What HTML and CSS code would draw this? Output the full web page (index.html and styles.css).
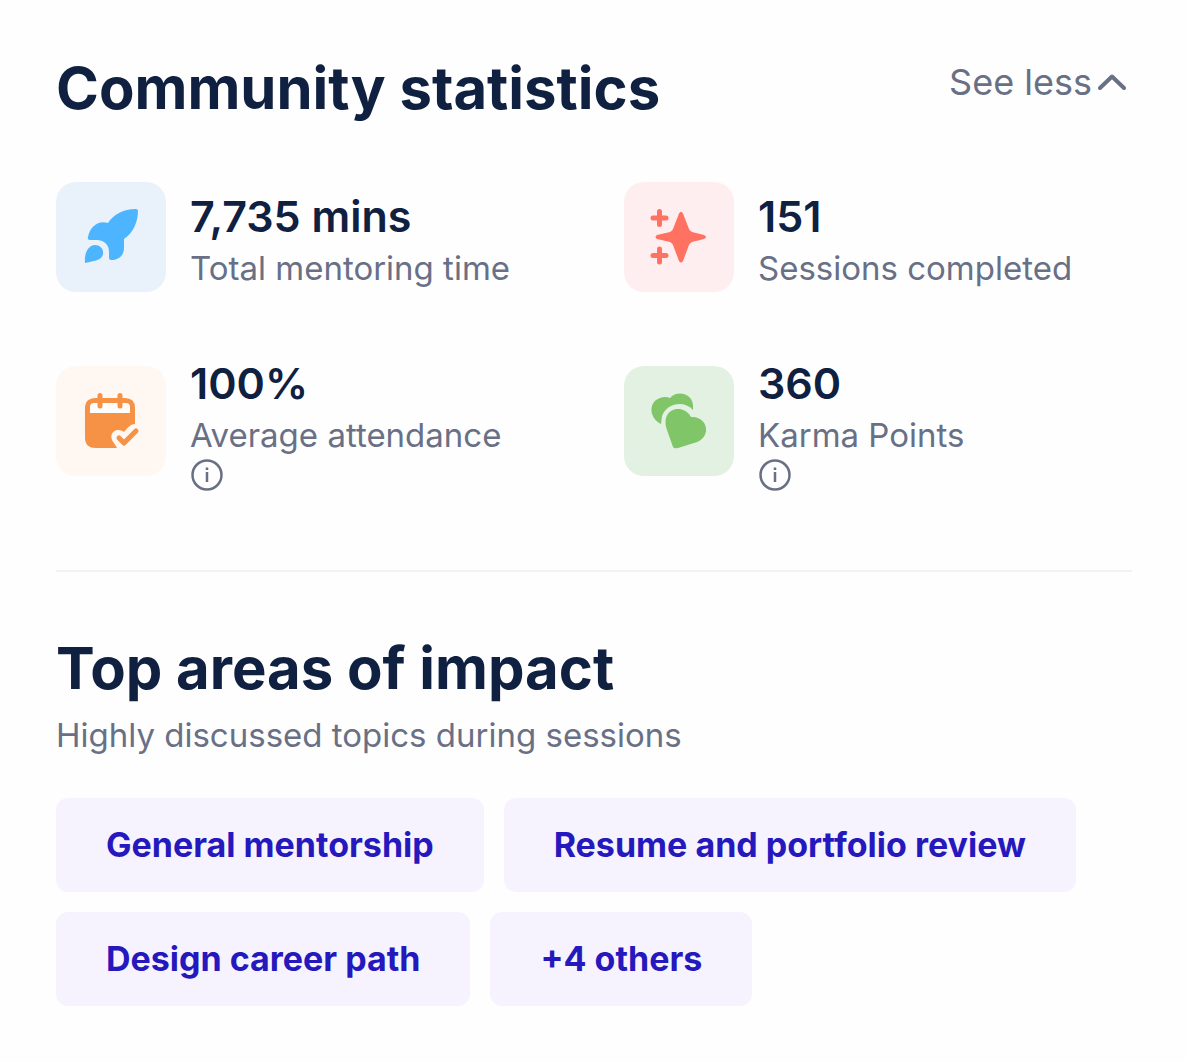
FILE: index.html
```html
<!DOCTYPE html>
<html lang="en">

<head>
    <meta charset="UTF-8">
    <meta name="viewport" content="width=device-width, initial-scale=1.0">
    <title>Community statistics</title>
    <link rel="stylesheet" href="styles.css">
</head>

<body>

    <main class="container">

        <!-- Community statistics -->
        <section class="statistics">
            <header class="section-header">
                <h2>Community statistics</h2>
                <button type="button" class="toggle">
                    See less
                    <svg class="chevron" viewBox="0 0 28 18" aria-hidden="true">
                        <path d="M2 15L14 3.500L26 15" />
                    </svg>
                </button>
            </header>

            <div class="stats">
                <div class="stat">
                    <div class="stat-icon blue">
                        <svg viewBox="0 0 110 110" aria-hidden="true">
                            <path d="M80 27Q82 27 82 29C82 40 77 51 68 57V66C68 74 62 78 55 78Q53 78 53 76V70C53 63 49 59 42 58H34Q31 58 32 55C34 45 42 38 52 41C57 33 67 27 80 27Z" />
                            <path d="M29 81C28 70 33 63 39 63C44 63 48 67 47 72C46 78 39 79 29 81Z" />
                        </svg>
                    </div>
                    <div class="stat-text">
                        <strong>7,735 mins</strong>
                        <span>Total mentoring time</span>
                    </div>
                </div>

                <div class="stat">
                    <div class="stat-icon red">
                        <svg viewBox="0 0 110 110" aria-hidden="true">
                            <path d="M55 31.500Q57 28 59 31.500L65 47Q66 49 68 50L80 53Q84 55 80 57L68 60Q66 61 65 63L59 79Q57 82 55 79L49 63Q48 61 46 60L33 57Q30 55 33 53L46 50Q48 49 49 47Z" />
                            <path class="line" d="M35.500 29.500V42.500M29 36H42M35.500 67V80M29 73.500H42" />
                        </svg>
                    </div>
                    <div class="stat-text">
                        <strong>151</strong>
                        <span>Sessions completed</span>
                    </div>
                </div>

                <div class="stat">
                    <div class="stat-icon orange">
                        <svg viewBox="0 0 110 110" aria-hidden="true">
                            <path d="M40 32H69Q79 32 79 42V58C75 58 72 61 68 66C59 60 51 69 58 77L61 82H40Q29 82 29 72V42Q29 32 40 32Z" />
                            <path class="paper" d="M34 47V41Q34 37 38 37H70Q74 37 74 41V47Z" />
                            <path class="line" d="M44 29.500V40M64 29.500V40M63 72L68 77L80 65" />
                        </svg>
                    </div>
                    <div class="stat-text">
                        <strong>100%</strong>
                        <span>Average attendance</span>
                        <button type="button" class="info" aria-label="About average attendance">
                            <svg viewBox="0 0 34 34" aria-hidden="true">
                                <circle cx="17" cy="17" r="14.500" />
                                <path d="M17 14V24M17 9.500V12" />
                            </svg>
                        </button>
                    </div>
                </div>

                <div class="stat">
                    <div class="stat-icon green">
                        <svg viewBox="0 0 110 110" aria-hidden="true">
                            <path d="M37 58C25 52 24 36 36 32Q41 30 46 32C53 24 68 27 69 39V44C60 34 43 37 38 50Z" />
                            <path d="M49 81L43 64C38 49 47 42 56 43Q63 44 67 51C76 50 83 57 82 65C81 71 77 75 70 77L54 82Q50 83 49 81Z" />
                        </svg>
                    </div>
                    <div class="stat-text">
                        <strong>360</strong>
                        <span>Karma Points</span>
                        <button type="button" class="info" aria-label="About karma points">
                            <svg viewBox="0 0 34 34" aria-hidden="true">
                                <circle cx="17" cy="17" r="14.500" />
                                <path d="M17 14V24M17 9.500V12" />
                            </svg>
                        </button>
                    </div>
                </div>
            </div>
        </section>

        <!-- Top areas of impact -->
        <section class="impact">
            <h2>Top areas of impact</h2>
            <p>Highly discussed topics during sessions</p>
            <div class="topics">
                <span class="topic">General mentorship</span>
                <span class="topic">Resume and portfolio review</span>
                <span class="topic">Design career path</span>
                <button type="button" class="topic">+4 others</button>
            </div>
        </section>

    </main>

</body>

</html>
```
FILE: styles.css
```css
/* General */
* {
    box-sizing: border-box;
}

body {
    margin: 0;
    background-color: #fefefe;
    color: #0f2040;
    font-family: Inter, sans-serif;
}

.container {
    padding: 52px 54px 52px 56px;
}

h2 {
    margin: 0;
    font-size: 58px;
    line-height: 72px;
    font-weight: 700;
}

button {
    padding: 0;
    border: none;
    background: none;
    color: inherit;
    font: inherit;
    cursor: pointer;
}

/* Section header */
.section-header {
    display: flex;
    justify-content: space-between;
    align-items: flex-start;
}

.toggle {
    display: flex;
    align-items: center;
    gap: 6px;
    padding-right: 6px;
    color: #697086;
    font-size: 36px;
    line-height: 60px;
}

.chevron {
    width: 28px;
    height: 18px;
}

.chevron path {
    fill: none;
    stroke: #697086;
    stroke-width: 4;
    stroke-linecap: round;
    stroke-linejoin: round;
}

/* Statistics grid */
.statistics {
    padding-bottom: 78px;
    border-bottom: 2px solid #f1f2f4;
}

.stats {
    display: grid;
    grid-template-columns: 1fr 1fr;
    gap: 58px 60px;
    margin-top: 58px;
}

.stat {
    display: flex;
    align-items: center;
    gap: 24px;
}

.stat-icon {
    flex: none;
    width: 110px;
    height: 110px;
    border-radius: 20px;
}

.stat-icon svg {
    display: block;
}

.stat-icon .line {
    fill: none;
    stroke-width: 5;
    stroke-linecap: round;
    stroke-linejoin: round;
}

.stat-icon .paper {
    fill: #fffdfb;
}

.blue {
    background-color: #e9f1fb;
    fill: #4db5ff;
}

.red {
    background-color: #ffeeef;
    fill: #ff7262;
}

.red .line {
    stroke: #ff7262;
}

.orange {
    background-color: #fff7f1;
    fill: #f59245;
}

.orange .line {
    stroke: #f59245;
}

.green {
    background-color: #e2f1e2;
    fill: #80c567;
}

.stat-text {
    display: flex;
    flex-direction: column;
    align-items: flex-start;
    padding-top: 4px;
}

.stat-text strong {
    font-size: 43px;
    line-height: 58px;
    font-weight: 600;
}

.stat-text span {
    color: #697086;
    font-size: 33px;
    line-height: 46px;
}

.info {
    height: 34px;
}

.info svg {
    display: block;
    width: 34px;
    height: 34px;
    fill: none;
    stroke: #697086;
    stroke-width: 2.5;
}

/* Areas of impact */
.impact {
    padding-top: 60px;
}

.impact p {
    margin: 8px 0 0;
    color: #697086;
    font-size: 33px;
    line-height: 46px;
}

.topics {
    display: flex;
    flex-wrap: wrap;
    gap: 20px;
    margin-top: 40px;
}

.topic {
    padding: 24px 50px;
    border-radius: 12px;
    background-color: #f6f3ff;
    color: #2518bd;
    font-size: 34px;
    line-height: 46px;
    font-weight: 700;
}
```
